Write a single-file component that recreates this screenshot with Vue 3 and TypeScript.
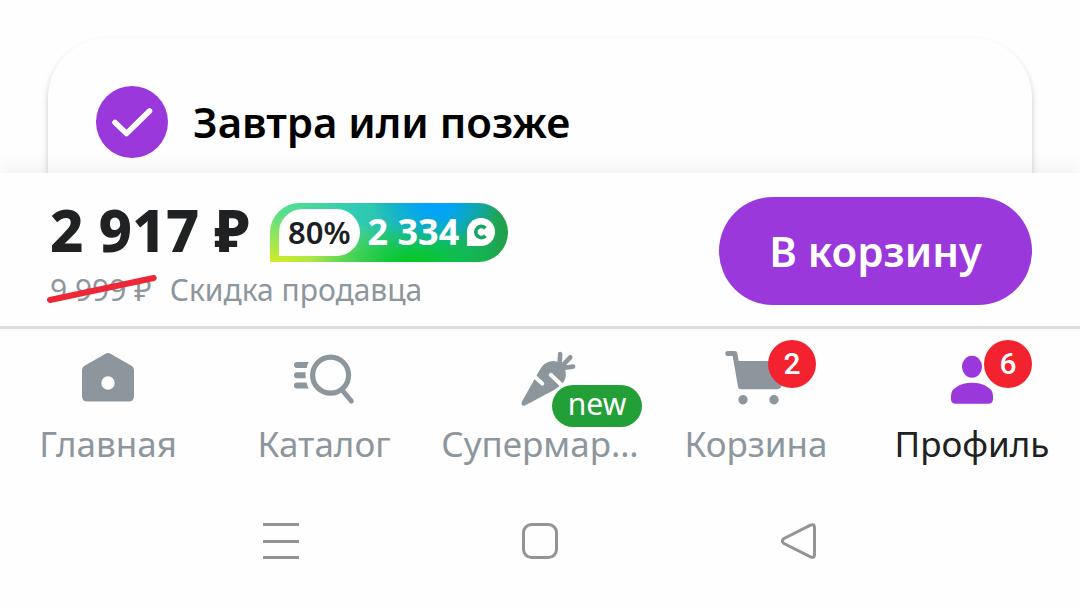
<script setup lang="ts">
import { ref } from 'vue'

interface Tab {
  id: string
  label: string
  badge?: string
  badgeKind?: 'count' | 'new'
}

const tabs: Tab[] = [
  { id: 'home', label: 'Главная' },
  { id: 'catalog', label: 'Каталог' },
  { id: 'market', label: 'Супермар…', badge: 'new', badgeKind: 'new' },
  { id: 'cart', label: 'Корзина', badge: '2', badgeKind: 'count' },
  { id: 'profile', label: 'Профиль', badge: '6', badgeKind: 'count' },
]

const activeTab = ref('profile')
</script>

<template>
  <div class="screen">
    <main class="content">
      <section class="card">
        <svg class="check" viewBox="0 0 72 72" aria-hidden="true">
          <circle cx="36" cy="36" r="36" fill="#9a38dc" />
          <path d="M19 36.500 30.500 47.500 53.500 25" fill="none" stroke="#fff" stroke-width="5.500" stroke-linecap="round" stroke-linejoin="round" />
        </svg>
        <h2 class="card-title">Завтра или позже</h2>
      </section>
    </main>

    <section class="buy">
      <div class="prices">
        <div class="price-row">
          <strong class="price">2 917 ₽</strong>
          <span class="bonus">
            <span class="percent">80%</span>
            <span class="bonus-price">2 334</span>
            <svg class="coin" viewBox="0 0 28 28" aria-hidden="true">
              <path d="M0 28V14a14 14 0 1 1 14 14Z" fill="#fff" />
              <path d="M18.500 10.200a5.600 5.600 0 1 0 0 7.600" fill="none" stroke="#12a568" stroke-width="3.600" />
            </svg>
          </span>
        </div>
        <div class="old-row">
          <span class="old">
            <s class="old-value">9 999 ₽</s>
            <svg class="strike" viewBox="0 0 110 30" preserveAspectRatio="none" aria-hidden="true">
              <path d="M3 26 107 4" stroke="#ee2737" stroke-width="6" stroke-linecap="round" />
            </svg>
          </span>
          <span>Скидка продавца</span>
        </div>
      </div>
      <button class="add" type="button">В корзину</button>
    </section>

    <nav class="tabs">
      <button
        v-for="tab in tabs"
        :key="tab.id"
        type="button"
        class="tab"
        :class="{ active: tab.id === activeTab }"
        @click="activeTab = tab.id"
      >
        <span class="icon-box">
          <svg class="icon" viewBox="0 0 72 72" fill="currentColor" aria-hidden="true">
            <path
              v-if="tab.id === 'home'"
              fill-rule="evenodd"
              d="M33.5 11.8Q36 10.4 38.500 11.800L59 23.500Q62 25.200 62 28.500V54Q62 59.500 56.500 59.500H15.500Q10 59.500 10 54V28.500Q10 25.200 13 23.500ZM36 34.300a6.700 6.700 0 1 0 0 13.400 6.700 6.700 0 0 0 0-13.400Z"
            />
            <g v-else-if="tab.id === 'catalog'">
              <circle cx="42.600" cy="33.200" r="18" fill="none" stroke="currentColor" stroke-width="5.200" />
              <path d="M54.500 48.500 63.300 59" stroke="currentColor" stroke-width="5" stroke-linecap="round" />
              <path d="M9 20H20.800Q19.200 23 18.600 26H9a3 3 0 0 1 0-6ZM9 30.300H17.600V36.300H9a3 3 0 0 1 0-6ZM9 40.400H18.600Q19.200 43.500 20.800 46.400H9a3 3 0 0 1 0-6Z" />
            </g>
            <g v-else-if="tab.id === 'market'">
              <path d="M18 59.500 34.500 30Q40 19 49 19Q53 19 55.500 20.500Q61.500 24 61.800 31Q62.200 38 58 41.500Q55 45 50 48L21 63.600Q16.500 64.500 18 59.500Z" />
              <path d="M56.200 12 55.500 23M66.300 15.300 57 25M69 24.600 58 26" stroke="currentColor" stroke-width="4.600" stroke-linecap="round" />
              <path d="M29 33 38.300 41.600M46.800 32.800 60 45.500" stroke="#fff" stroke-width="4" stroke-linecap="round" />
            </g>
            <g v-else-if="tab.id === 'cart'">
              <path d="M7.800 11.500H14.800L20.500 44.500" fill="none" stroke="currentColor" stroke-width="5" stroke-linecap="round" stroke-linejoin="round" />
              <path d="M16.500 19H66L61.500 43.500Q60.800 47.300 57 47.300H22Q18.800 47.300 18.200 44Z" />
              <circle cx="23" cy="57.700" r="4.700" />
              <circle cx="54" cy="57.700" r="4.700" />
            </g>
            <g v-else>
              <ellipse cx="36" cy="24.800" rx="10" ry="11" />
              <path d="M15 54Q15 48 20.500 45Q27 40.800 36 40.800T51.500 45Q57 48 57 54V57Q57 61.800 52.200 61.800H19.800Q15 61.800 15 57Z" />
            </g>
          </svg>
          <span v-if="tab.badge" class="badge" :class="tab.badgeKind">{{ tab.badge }}</span>
        </span>
        <span class="label">{{ tab.label }}</span>
      </button>
    </nav>

    <footer class="system">
      <button type="button" aria-label="Недавние">
        <svg viewBox="0 0 36 38" aria-hidden="true"><path d="M0 2.500H36M0 19.500H36M0 35.500H36" stroke="#949494" stroke-width="3" /></svg>
      </button>
      <button type="button" aria-label="Домой">
        <svg viewBox="0 0 36 38" aria-hidden="true"><rect x="1.500" y="2.500" width="33" height="33" rx="8" fill="none" stroke="#949494" stroke-width="3" /></svg>
      </button>
      <button type="button" aria-label="Назад">
        <svg viewBox="0 0 36 38" aria-hidden="true"><path d="M29.500 3.200Q33.500 1.500 33.500 5.500V32.500Q33.500 36.500 29.500 34.800L3 21.500Q-.500 19 3 16.500Z" fill="none" stroke="#949494" stroke-width="3" stroke-linejoin="round" /></svg>
      </button>
    </footer>
  </div>
</template>

<style>
body {
  margin: 0;
  background: #fefefe;
}
</style>

<style scoped>
.screen {
  min-height: 100vh;
  display: flex;
  flex-direction: column;
  overflow: hidden;
  background: #fefefe;
  font-family: "Noto Sans", "Open Sans", sans-serif;
}
button {
  margin: 0;
  border: 0;
  padding: 0;
  background: none;
  font: inherit;
  color: inherit;
  cursor: pointer;
}
svg {
  display: block;
}
.content {
  padding: 38px 48px 0;
}
.card {
  display: flex;
  align-items: center;
  gap: 25px;
  padding: 48px 48px 15px;
  border-radius: 60px 60px 0 0;
  background: #fefefe;
  box-shadow: 0 4px 6px rgba(0, 0, 0, 0.22);
}
.check {
  width: 72px;
  height: 72px;
  flex: none;
}
.card-title {
  margin: 0;
  font-size: 42px;
  line-height: 56px;
  font-weight: 600;
  color: #000;
}
.buy {
  position: relative;
  display: flex;
  align-items: flex-start;
  justify-content: space-between;
  padding: 24px 48px 18px;
  border-bottom: 3px solid #dcdfe2;
  background: #fefefe;
  box-shadow: 0 -6px 18px rgba(0, 0, 0, 0.05);
}
.price-row {
  display: flex;
  align-items: center;
  gap: 20px;
  padding: 3px 0 8px 2px;
}
.price {
  padding-bottom: 4px;
  font-size: 58px;
  line-height: 60px;
  font-weight: 800;
  color: #202122;
  white-space: nowrap;
}
.bonus {
  display: flex;
  align-items: center;
  box-sizing: border-box;
  height: 59px;
  padding: 0 13px 0 9px;
  border-radius: 30px 30px 30px 0;
  background:
    radial-gradient(ellipse 64px 42px at 70% 0, #00a2ff 0, rgba(0, 162, 255, 0.85) 30%, rgba(0, 162, 255, 0) 100%),
    radial-gradient(ellipse 100px 40px at 60% 100%, #04c81c 0, rgba(4, 200, 28, 0) 100%),
    radial-gradient(ellipse 130px 50px at 4% 100%, #cfec28 0, rgba(207, 236, 40, 0) 100%),
    linear-gradient(90deg, #5ce286 0%, #31cbb4 36%, #16b49c 72%, #23a047 100%);
  color: #fff;
}
.percent {
  padding: 0 9px;
  border-radius: 24px 24px 24px 0;
  background: #fff;
  color: #1c1e22;
  font-size: 31px;
  line-height: 47px;
  font-weight: 600;
}
.bonus-price {
  margin: 0 8px;
  font-size: 36px;
  line-height: 48px;
  font-weight: 700;
  white-space: nowrap;
}
.coin {
  width: 28px;
  height: 28px;
}
.old-row {
  display: flex;
  gap: 18px;
  padding-left: 2px;
  font-size: 30px;
  line-height: 36px;
  color: #8d969d;
}
.old {
  position: relative;
}
.old-value {
  text-decoration: none;
}
.strike {
  position: absolute;
  left: -3px;
  top: 2px;
  width: calc(100% + 8px);
  height: 30px;
}
.add {
  padding: 0 50px;
  border-radius: 54px;
  background: #9a38dc;
  color: #fff;
  font-size: 42px;
  line-height: 108px;
  font-weight: 600;
}
.tabs {
  display: grid;
  grid-template-columns: repeat(5, 1fr);
  padding-top: 13px;
  color: #8d969d;
}
.tab {
  display: flex;
  flex-direction: column;
  align-items: center;
  min-width: 0;
}
.icon-box {
  position: relative;
  width: 72px;
  height: 72px;
}
.icon {
  width: 72px;
  height: 72px;
}
.active .icon {
  color: #9a38dc;
}
.active .label {
  color: #202122;
}
.label {
  margin-top: 6px;
  font-size: 35px;
  line-height: 48px;
  white-space: nowrap;
}
.badge {
  position: absolute;
  color: #fff;
  font-size: 30px;
  text-align: center;
}
.count {
  left: 48px;
  top: -2px;
  width: 48px;
  border-radius: 24px;
  background: #f3222f;
  font-family: Roboto, sans-serif;
  font-weight: 500;
  line-height: 48px;
}
.new {
  left: 48px;
  top: 43px;
  width: 90px;
  height: 42px;
  border-radius: 21px;
  background: #239f38;
  line-height: 38px;
}
.system {
  display: grid;
  grid-template-columns: repeat(3, 1fr);
  flex: 1;
  align-items: center;
  padding: 14px 14% 8px;
}
.system button {
  display: flex;
  justify-content: center;
}
.system svg {
  width: 36px;
  height: 38px;
}
</style>
